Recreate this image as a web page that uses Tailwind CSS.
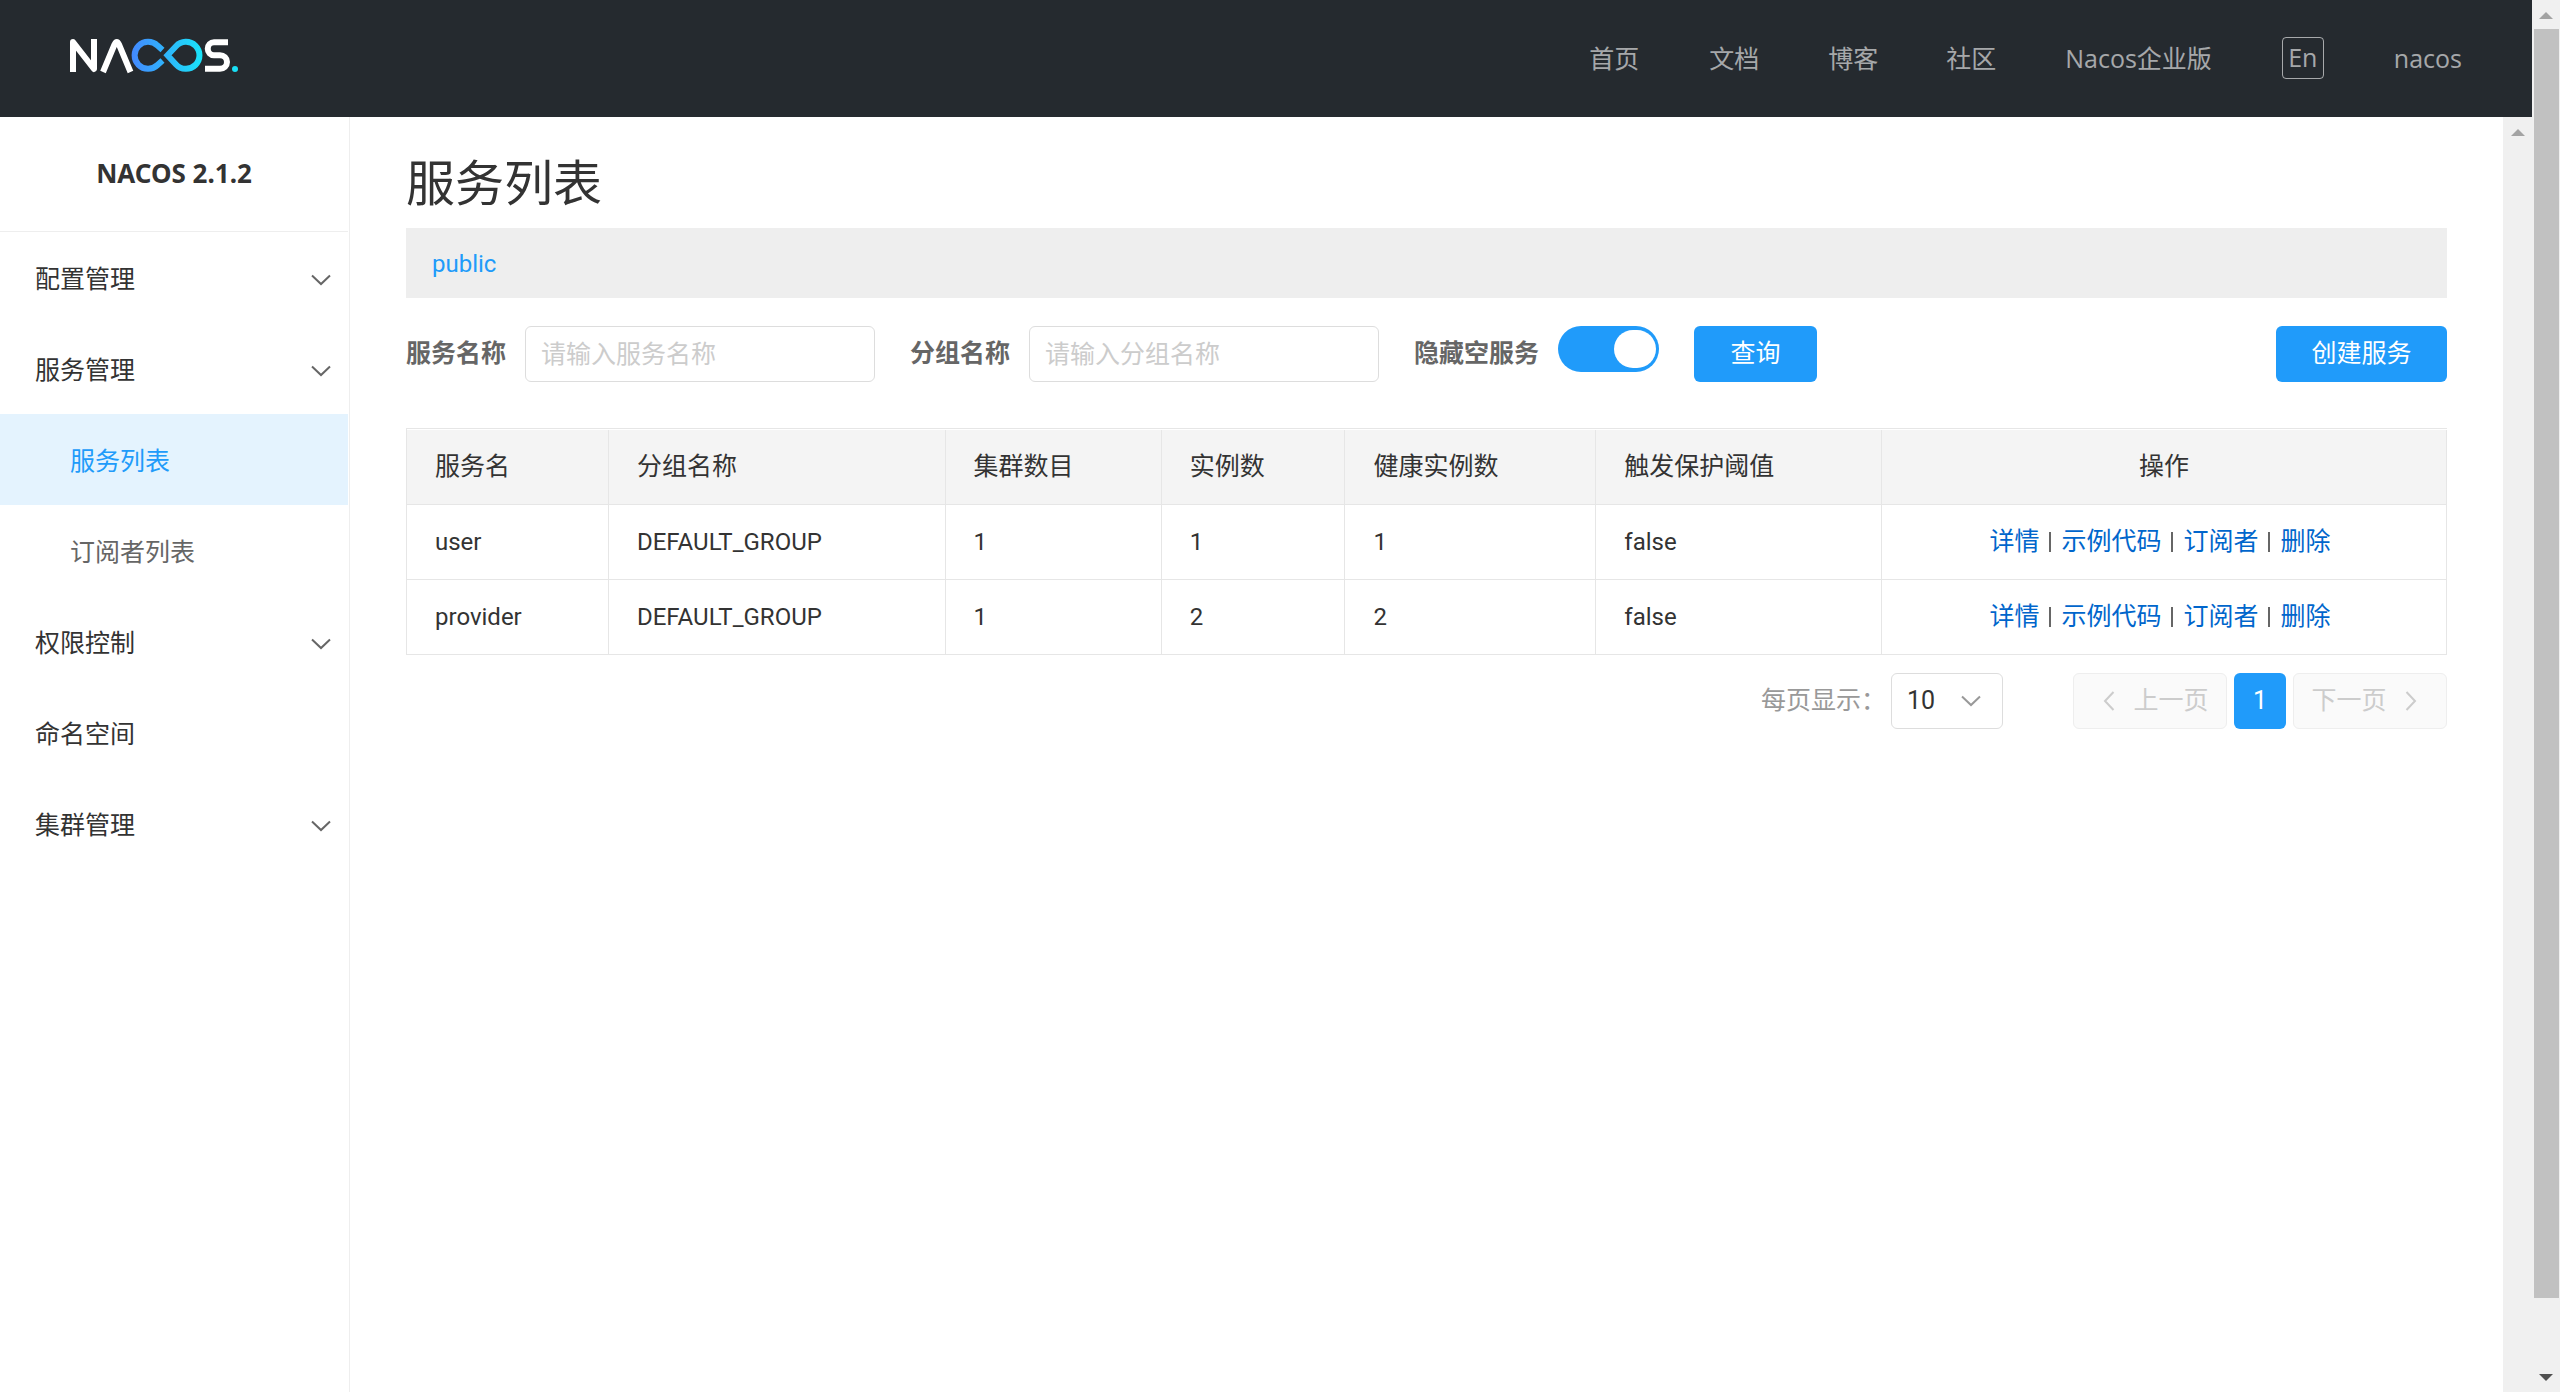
<!DOCTYPE html>
<html lang="zh-CN">
<head>
<meta charset="utf-8">
<title>Nacos</title>
<script src="https://cdn.jsdelivr.net/npm/@tailwindcss/browser@4"></script>
</head>
<body class="flex h-screen overflow-hidden bg-white font-['Roboto','Noto_Sans_CJK_SC',sans-serif] text-[25px] leading-9 text-[#333]">
<div class="flex min-w-0 flex-1 flex-col">
  <header class="flex h-[117px] shrink-0 items-center justify-between bg-[#252a2f] pr-[35px] pb-[2px] pl-[70px] font-['Open_Sans','Noto_Sans_CJK_SC',sans-serif] text-white/60">
    <a href="#" aria-label="Nacos" class="pb-1">
      <svg width="170" height="36" viewBox="0 0 170 36" fill="none" stroke-width="6">
        <defs>
          <linearGradient id="loop" gradientUnits="userSpaceOnUse" x1="62" y1="0" x2="132" y2="0">
            <stop offset="0" stop-color="#4389ff"/><stop offset="1" stop-color="#19e3f8"/>
          </linearGradient>
        </defs>
        <g stroke="#fff" stroke-linejoin="round">
          <path d="M3 34V4L24 31V1"/>
          <path d="M33 34L44.500 6.500Q46.800 1.500 49 6.500L60.500 34"/>
          <path d="M158 4.300H144a6.200 6.400 0 0 0 0 12.900H150a7 6.800 0 0 1 0 13.600H135"/>
        </g>
        <g stroke="url(#loop)">
          <path d="M92.500 12L87.500 7.600A13.500 13.500 0 1 0 87.500 27L92.500 22.500"/>
          <path d="M97.500 17.300L106 8.200A13.500 13.500 0 1 1 106 26.400Z"/>
        </g>
        <circle cx="165" cy="31" r="3" fill="#19dff5"/>
      </svg>
    </a>
    <nav class="flex items-center">
      <a href="#" class="px-[35px]">首页</a>
      <a href="#" class="px-[35px]">文档</a>
      <a href="#" class="px-[34px]">博客</a>
      <a href="#" class="px-[34px]">社区</a>
      <a href="#" class="px-[35px]">Nacos企业版</a>
      <button class="mx-[35px] flex size-[42px] items-center justify-center rounded-sm border border-white/60 pb-[2px]">En</button>
      <a href="#" class="px-[35px]">nacos</a>
    </nav>
  </header>
  <div class="flex min-h-0 flex-1">
    <aside class="w-[350px] shrink-0 border-r border-[#eee]">
      <h2 class="mr-px h-[115px] border-b border-[#eee] pt-[38px] text-center font-['Noto_Sans',sans-serif] text-[26px] font-bold">NACOS 2.1.2</h2>
      <nav class="mr-px">
        <button class="flex h-[91px] w-full items-center justify-between pt-1 pr-[17px] pl-[35px]">配置管理
          <svg width="20" height="12" viewBox="0 0 20 12" fill="none" stroke="#666" stroke-width="2"><path d="M1 1.500L10 10L19 1.500"/></svg></button>
        <button class="flex h-[91px] w-full items-center justify-between pt-1 pr-[17px] pl-[35px]">服务管理
          <svg width="20" height="12" viewBox="0 0 20 12" fill="none" stroke="#666" stroke-width="2"><path d="M1 1.500L10 10L19 1.500"/></svg></button>
        <a href="#" class="flex h-[91px] items-center bg-[#e4f3fe] pt-1 pl-[70px] text-[#209bfa]">服务列表</a>
        <a href="#" class="flex h-[91px] items-center pt-1 pl-[70px] text-[#666]">订阅者列表</a>
        <button class="flex h-[91px] w-full items-center justify-between pt-1 pr-[17px] pl-[35px]">权限控制
          <svg width="20" height="12" viewBox="0 0 20 12" fill="none" stroke="#666" stroke-width="2"><path d="M1 1.500L10 10L19 1.500"/></svg></button>
        <a href="#" class="flex h-[91px] items-center pt-1 pl-[35px]">命名空间</a>
        <button class="flex h-[91px] w-full items-center justify-between pt-1 pr-[17px] pl-[35px]">集群管理
          <svg width="20" height="12" viewBox="0 0 20 12" fill="none" stroke="#666" stroke-width="2"><path d="M1 1.500L10 10L19 1.500"/></svg></button>
      </nav>
    </aside>
    <main class="min-w-0 flex-1 px-14 pt-[33px]">
      <h1 class="h-[78px] text-[49px] leading-[70px]">服务列表</h1>
      <div class="flex h-[70px] items-center bg-[#eee] px-[26px] pt-[2px]"><a href="#" class="text-[24px] text-[#209bfa]">public</a></div>
      <form class="mt-7 flex h-14 items-center">
        <label for="svc" class="w-[98px] whitespace-nowrap font-bold text-[#666]">服务名称</label>
        <input id="svc" type="text" placeholder="请输入服务名称" class="ml-[21px] h-14 w-[350px] rounded-md border border-[#ddd] px-[15px] placeholder:text-[#ccc]">
        <label for="grp" class="ml-[35px] w-[98px] whitespace-nowrap font-bold text-[#666]">分组名称</label>
        <input id="grp" type="text" placeholder="请输入分组名称" class="ml-[21px] h-14 w-[350px] rounded-md border border-[#ddd] px-[15px] placeholder:text-[#ccc]">
        <label for="hide" class="ml-[35px] w-[123px] whitespace-nowrap font-bold text-[#666]">隐藏空服务</label>
        <input id="hide" type="checkbox" role="switch" checked class="relative ml-[21px] h-[46px] w-[101px] appearance-none self-start rounded-full bg-[#209bfa] before:absolute before:top-1 before:right-[3px] before:h-[38px] before:w-[42px] before:rounded-full before:bg-white before:content-['']">
        <button type="button" class="ml-[35px] h-14 w-[123px] rounded-md bg-[#209bfa] text-white">查询</button>
        <button type="button" class="ml-auto h-14 w-[171px] rounded-md bg-[#209bfa] text-white">创建服务</button>
      </form>
      <div class="mt-[46px] border-t border-l border-[#e6e6e6] pt-px">
        <table class="w-full table-fixed border-separate border-spacing-0 text-left">
          <colgroup>
            <col class="w-[9.9%]"><col class="w-[16.5%]"><col class="w-[10.6%]"><col class="w-[9%]"><col class="w-[12.3%]"><col class="w-[14%]"><col>
          </colgroup>
          <thead>
            <tr class="h-[75px] bg-[#f4f4f4] *:border-r *:border-b *:border-[#e6e6e6] *:px-7 *:font-normal">
              <th>服务名</th><th>分组名称</th><th>集群数目</th><th>实例数</th><th>健康实例数</th><th>触发保护阈值</th><th class="text-center">操作</th>
            </tr>
          </thead>
          <tbody class="text-[24px]">
            <tr class="h-[75px] *:border-r *:border-b *:border-[#e6e6e6] *:px-7">
              <td>user</td><td>DEFAULT_GROUP</td><td>1</td><td>1</td><td>1</td><td>false</td>
              <td><div class="flex items-center justify-center gap-[10px] pr-2 text-[25px] text-[#06c]"><a href="#">详情</a><i class="h-5 w-[2px] bg-[#666]"></i><a href="#">示例代码</a><i class="h-5 w-[2px] bg-[#666]"></i><a href="#">订阅者</a><i class="h-5 w-[2px] bg-[#666]"></i><a href="#">删除</a></div></td>
            </tr>
            <tr class="h-[75px] *:border-r *:border-b *:border-[#e6e6e6] *:px-7">
              <td>provider</td><td>DEFAULT_GROUP</td><td>1</td><td>2</td><td>2</td><td>false</td>
              <td><div class="flex items-center justify-center gap-[10px] pr-2 text-[25px] text-[#06c]"><a href="#">详情</a><i class="h-5 w-[2px] bg-[#666]"></i><a href="#">示例代码</a><i class="h-5 w-[2px] bg-[#666]"></i><a href="#">订阅者</a><i class="h-5 w-[2px] bg-[#666]"></i><a href="#">删除</a></div></td>
            </tr>
          </tbody>
        </table>
      </div>
      <div class="mt-[18px] flex h-14 items-center justify-end">
        <label for="size" class="w-[130px] whitespace-nowrap text-[#999]">每页显示：</label>
        <div class="relative">
          <select id="size" class="block h-14 w-28 appearance-none rounded-md border border-[#ddd] bg-white pl-[15px]"><option>10</option><option>20</option></select>
          <svg class="pointer-events-none absolute top-[22px] right-[22px]" width="20" height="12" viewBox="0 0 20 12" fill="none" stroke="#999" stroke-width="2"><path d="M1 1.500L10 10L19 1.500"/></svg>
        </div>
        <div class="ml-[70px] flex gap-[7px]">
          <button disabled class="flex h-14 w-[154px] items-center justify-center gap-[18px] rounded-md border border-[#eee] bg-[#fafafa] pl-3 text-[#ccc]">
            <svg width="12" height="20" viewBox="0 0 12 20" fill="none" stroke="#ccc" stroke-width="2"><path d="M10.500 1L2 10L10.500 19"/></svg>上一页</button>
          <button class="h-14 w-[52px] rounded-md bg-[#209bfa] text-white">1</button>
          <button disabled class="flex h-14 w-[154px] items-center justify-center gap-[18px] rounded-md border border-[#eee] bg-[#fafafa] pr-3 text-[#ccc]">下一页
            <svg width="12" height="20" viewBox="0 0 12 20" fill="none" stroke="#ccc" stroke-width="2"><path d="M1.500 1L10 10L1.500 19"/></svg></button>
        </div>
      </div>
    </main>
    <div aria-hidden="true" class="flex w-[29px] shrink-0 justify-center bg-[#f0f0f0] pt-3">
      <svg width="14" height="7" viewBox="0 0 14 7" fill="#a3a3a3"><path d="M7 0L14 7H0Z"/></svg>
    </div>
  </div>
</div>
<div aria-hidden="true" class="flex w-7 shrink-0 flex-col items-center bg-[#f0f0f0] pt-3 pb-[11px]">
  <svg class="shrink-0" width="14" height="7" viewBox="0 0 14 7" fill="#a3a3a3"><path d="M7 0L14 7H0Z"/></svg>
  <div class="mt-[10px] mb-[76px] w-[25px] flex-1 bg-[#c1c1c1]"></div>
  <svg class="shrink-0" width="14" height="7" viewBox="0 0 14 7" fill="#505050"><path d="M0 0H14L7 7Z"/></svg>
</div>
</body>
</html>
